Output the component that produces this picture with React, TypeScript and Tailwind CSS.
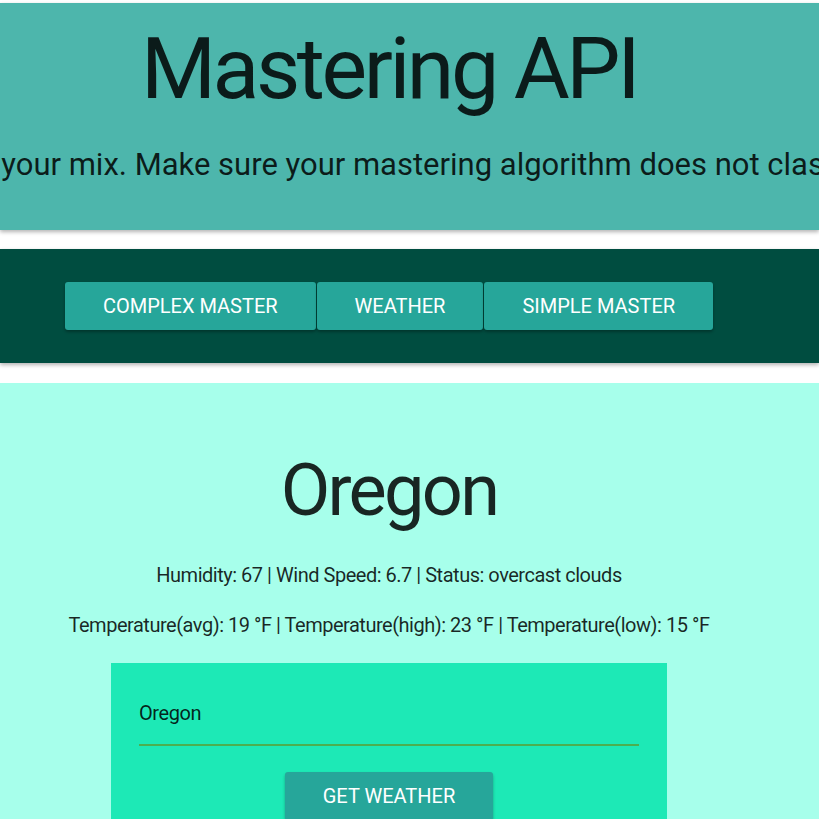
import { useState } from "react";

const NAV = ["Complex Master", "Weather", "Simple Master"];

export default function App() {
  const [city, setCity] = useState("Oregon");

  return (
    <div className="min-h-[819px] w-[819px] overflow-hidden bg-white pt-[3px] font-['Roboto',sans-serif]">
      {/* Header */}
      <header className="h-[227px] overflow-hidden bg-[#4db6ac] pt-[16px] shadow-[0_2px_4px_rgba(0,0,0,0.3)]">
        <div className="flex w-[778px] flex-col items-center">
          <h1 className="whitespace-nowrap text-[86px] leading-[100px] tracking-[-0.04em] text-black/85">Mastering API</h1>
          <div className="mt-[26px] flex w-full justify-center">
            <p className="shrink-0 whitespace-nowrap pr-[12px] text-[31px] leading-[40px] text-black/85">
              Now master your mix. Make sure your mastering algorithm does not clash with it.
            </p>
          </div>
        </div>
      </header>

      {/* Nav */}
      <nav className="mt-[19px] flex h-[114px] items-center bg-[#004d40] shadow-[0_2px_4px_rgba(0,0,0,0.3)]">
        <div className="flex w-[778px] justify-center gap-px">
          {NAV.map((item) => (
            <button
              key={item}
              className="h-12 rounded-[3px] bg-[#26a69a] px-[38px] text-[20px] uppercase text-white shadow-[0_2px_3px_rgba(0,0,0,0.3)]"
            >
              {item}
            </button>
          ))}
        </div>
      </nav>

      {/* Weather */}
      <main className="mt-[20px] bg-[#a7ffeb] pt-[66px] pb-10">
        <div className="flex w-[778px] flex-col items-center text-black/85">
          <h2 className="text-[72px] leading-[84px] tracking-[-0.037em]">{city}</h2>
          <p className="mt-[28px] text-[20px] leading-[28px] tracking-[-0.024em]">
            Humidity: 67 | Wind Speed: 6.7 | Status: overcast clouds
          </p>
          <p className="mt-[22px] text-[20px] leading-[28px] tracking-[-0.024em]">
            Temperature(avg): 19 °F | Temperature(high): 23 °F | Temperature(low): 15 °F
          </p>

          <div className="mt-[24px] flex w-[556px] flex-col items-center bg-[#1de9b6] px-[28px] pt-[36px] pb-8">
            <input
              value={city}
              onChange={(e) => setCity(e.target.value)}
              className="w-full border-b-2 border-[#4caf50] bg-transparent pb-[17px] text-[20px] leading-[28px] tracking-[-0.02em] text-black/85 outline-none"
            />
            <button className="mt-[26px] h-12 rounded-[3px] bg-[#26a69a] px-[38px] text-[20px] uppercase text-white shadow-[0_2px_3px_rgba(0,0,0,0.3)]">
              Get Weather
            </button>
          </div>
        </div>
      </main>
    </div>
  );
}
